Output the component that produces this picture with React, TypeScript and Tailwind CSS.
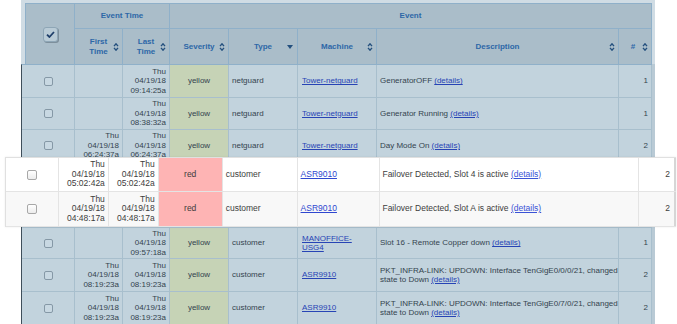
import React from "react";

type Row = {
  first?: string[];
  last: string[];
  sev: "yellow" | "red";
  type: string;
  machine: string[];
  desc: string[];
  n: number;
  h: string;
  hidden?: boolean;
};

const t = (time: string) => ["Thu", "04/19/18", time];

const popRows: Row[] = [
  { first: t("05:02:42a"), last: t("05:02:42a"), sev: "red", type: "customer", machine: ["ASR9010"], desc: ["Failover Detected, Slot 4 is active"], n: 2, h: "h-[34px]" },
  { first: t("04:48:17a"), last: t("04:48:17a"), sev: "red", type: "customer", machine: ["ASR9010"], desc: ["Failover Detected, Slot A is active"], n: 2, h: "h-[35px]" },
];

// rows 4 and 5 sit under the highlighted rows, so they only keep their cells
const dimRows: Row[] = [
  { last: t("09:14:25a"), sev: "yellow", type: "netguard", machine: ["Tower-netguard"], desc: ["GeneratorOFF"], n: 1, h: "h-[33px]" },
  { last: t("08:38:32a"), sev: "yellow", type: "netguard", machine: ["Tower-netguard"], desc: ["Generator Running"], n: 1, h: "h-[32px]" },
  { first: t("06:24:37a"), last: t("06:24:37a"), sev: "yellow", type: "netguard", machine: ["Tower-netguard"], desc: ["Day Mode On"], n: 2, h: "h-[32px]" },
  { ...popRows[0], h: "h-[33px]", hidden: true },
  { ...popRows[1], h: "h-[33px]", hidden: true },
  { last: t("09:57:18a"), sev: "yellow", type: "customer", machine: ["MANOFFICE-", "USG4"], desc: ["Slot 16 - Remote Copper down"], n: 1, h: "h-[31px]" },
  { first: t("08:19:23a"), last: t("08:19:23a"), sev: "yellow", type: "customer", machine: ["ASR9910"], desc: ["PKT_INFRA-LINK: UPDOWN: Interface TenGigE0/0/0/21, changed", "state to Down"], n: 2, h: "h-[33px]" },
  { first: t("08:19:23a"), last: t("08:19:23a"), sev: "yellow", type: "customer", machine: ["ASR9910"], desc: ["PKT_INFRA-LINK: UPDOWN: Interface TenGigE0/7/0/21, changed", "state to Down"], n: 2, h: "h-[33px]" },
];

function Sort() {
  return (
    <svg width="6" height="9" viewBox="0 0 6 9" className="absolute right-[3px] top-1/2 -translate-y-1/2 text-[#24507e]">
      <path d="M1 3.6 L3 1.4 L5 3.6 M1 5.4 L3 7.6 L5 5.4" fill="none" stroke="currentColor" strokeWidth="1.4" />
    </svg>
  );
}

function Lines({ lines }: { lines: string[] }) {
  return (
    <>
      {lines.map((l, i) => (
        <div key={i} className="whitespace-nowrap">{l}</div>
      ))}
    </>
  );
}

function Box({ pop }: { pop?: boolean }) {
  return pop ? (
    <div className="w-[10px] h-[10px] rounded-[2px] border border-[#a8a8a8] bg-gradient-to-b from-white to-[#ececec]" />
  ) : (
    <div className="w-[9px] h-[9px] rounded-[2px] border border-[#8598a6] bg-[#c8d8e2]" />
  );
}

function HeadCell({ w, children, icon }: { w: string; children: React.ReactNode; icon?: "sort" | "drop" }) {
  return (
    <div className={`${w} relative h-[35px] border-r border-[#8fb0c9] flex items-center justify-center text-center leading-[9.5px]`}>
      {children}
      {icon === "sort" && <Sort />}
      {icon === "drop" && (
        <svg width="6" height="4" viewBox="0 0 6 4" className="absolute right-[4px] top-1/2 -translate-y-1/2 text-[#24507e]">
          <path d="M0 0 L6 0 L3 4 Z" fill="currentColor" />
        </svg>
      )}
    </div>
  );
}

function DimRow({ r }: { r: Row }) {
  const cell = "border-r border-[#a8bfcd] h-full flex items-center";
  const show = !r.hidden;
  return (
    <div className={`${r.h} flex border-b border-[#a8bfcd] bg-[#c2d3dd] text-[#34434e] text-[8px] leading-[9.5px]`}>
      <div className={`${cell} w-[53px] justify-center`}>{show && <Box />}</div>
      <div className={`${cell} w-[48px] justify-end text-right pr-[3px]`}>{show && r.first && <div><Lines lines={r.first} /></div>}</div>
      <div className={`${cell} w-[47px] justify-end text-right pr-[3px]`}>{show && <div><Lines lines={r.last} /></div>}</div>
      <div className={`${cell} w-[59px] justify-center ${r.sev === "yellow" ? "bg-[#c6d3b6]" : "bg-[#d8b3b6]"}`}>{show && r.sev}</div>
      <div className={`${cell} w-[69px] pl-[3px]`}>{show && r.type}</div>
      <div className={`${cell} w-[79px] pl-[4px] text-[#2744b5] underline`}>{show && <div><Lines lines={r.machine} /></div>}</div>
      <div className={`${cell} w-[242px] pl-[3px]`}>
        {show && (
          <div>
            {r.desc.map((d, i) => (
              <div key={i} className="whitespace-nowrap">
                {d}
                {i === r.desc.length - 1 && (
                  <>
                    {" "}
                    <span className="text-[#2744b5] underline">(details)</span>
                  </>
                )}
              </div>
            ))}
          </div>
        )}
      </div>
      <div className="w-[33px] h-full flex items-center justify-end pr-[3px] border-r border-[#a8bfcd]">{show && r.n}</div>
    </div>
  );
}

function PopRow({ r, alt }: { r: Row; alt?: boolean }) {
  const cell = "border-r border-[#e4e4e4] h-full flex items-center";
  return (
    <div className={`${r.h} ${alt ? "bg-[#f8f8f8]" : "bg-white"} flex border-b border-[#e4e4e4] text-[#3d3d3d] text-[8.5px] leading-[9.6px]`}>
      <div className={`${cell} w-[53px] justify-center`}><Box pop /></div>
      <div className={`${cell} w-[50px] justify-end text-right pr-[3px]`}><div><Lines lines={r.first ?? []} /></div></div>
      <div className={`${cell} w-[50px] justify-end text-right pr-[3px]`}><div><Lines lines={r.last} /></div></div>
      <div className={`${cell} w-[64px] justify-center bg-[#feb4b4]`}>{r.sev}</div>
      <div className={`${cell} w-[75px] pl-[3px]`}>{r.type}</div>
      <div className={`${cell} w-[83px] pl-[3px] text-[#2f47d0] underline`}>{r.machine[0]}</div>
      <div className={`${cell} w-[259px] pl-[2px] whitespace-nowrap`}>
        {r.desc[0]}&nbsp;<span className="text-[#3a52d6] underline">(details)</span>
      </div>
      <div className="w-[37px] h-full flex items-center justify-end pr-[4px] border-r-2 border-[#d6d6d6]">{r.n}</div>
    </div>
  );
}

export default function App() {
  return (
    <div className="relative w-[677px] h-[324px] overflow-hidden bg-white font-['Liberation_Sans',Arial,sans-serif]">
      <div className="ml-[21px] w-[634px] bg-[#b9cad5]">
        <div className="pl-[4px] pt-[3px] pr-[3px] bg-[#d0dce4]">
          <div className="flex bg-[#aabdc9] border-t border-l border-[#8fb0c9] text-[#2d67a7] font-bold text-[8px]">
            <div className="w-[50px] h-[60px] border-r border-[#8fb0c9] flex items-center justify-center">
              <div className="w-[15px] h-[15px] rounded-[3px] bg-[#b9cbd6] border border-[#8ea6b6] shadow-[1px_1px_0_#7d8f9c] flex items-center justify-center">
                <svg width="9" height="7" viewBox="0 0 9 7">
                  <path d="M1 3.6 L3.4 6 L8 1" fill="none" stroke="#1f3f6a" strokeWidth="1.8" />
                </svg>
              </div>
            </div>
            <div className="flex flex-col">
              <div className="h-[25px] w-[95px] border-r border-b border-[#8fb0c9] flex items-center justify-center">Event Time</div>
              <div className="flex">
                <HeadCell w="w-[48px]" icon="sort"><span>First<br />Time</span></HeadCell>
                <HeadCell w="w-[47px]" icon="sort"><span>Last<br />Time</span></HeadCell>
              </div>
            </div>
            <div className="flex flex-col">
              <div className="h-[25px] w-[482px] border-r border-b border-[#8fb0c9] flex items-center justify-center">Event</div>
              <div className="flex">
                <HeadCell w="w-[59px]" icon="sort">Severity</HeadCell>
                <HeadCell w="w-[69px]" icon="drop">Type</HeadCell>
                <HeadCell w="w-[79px]" icon="sort">Machine</HeadCell>
                <HeadCell w="w-[242px]" icon="sort">Description</HeadCell>
                <HeadCell w="w-[33px]" icon="sort"><span className="pr-[4px]">#</span></HeadCell>
              </div>
            </div>
          </div>
        </div>
        <div className="w-[631px] border-l border-[#3e4e5a] border-t border-t-[#8fb0c9]">
          {dimRows.map((r, i) => (
            <DimRow key={i} r={r} />
          ))}
        </div>
      </div>

      <div className="absolute left-[5px] top-[157px] w-[671px] border-t border-l border-[#e0e0e0] shadow-[0_0_2px_rgba(0,0,0,0.08)]">
        {popRows.map((r, i) => (
          <PopRow key={i} r={r} alt={i === 1} />
        ))}
      </div>
    </div>
  );
}
